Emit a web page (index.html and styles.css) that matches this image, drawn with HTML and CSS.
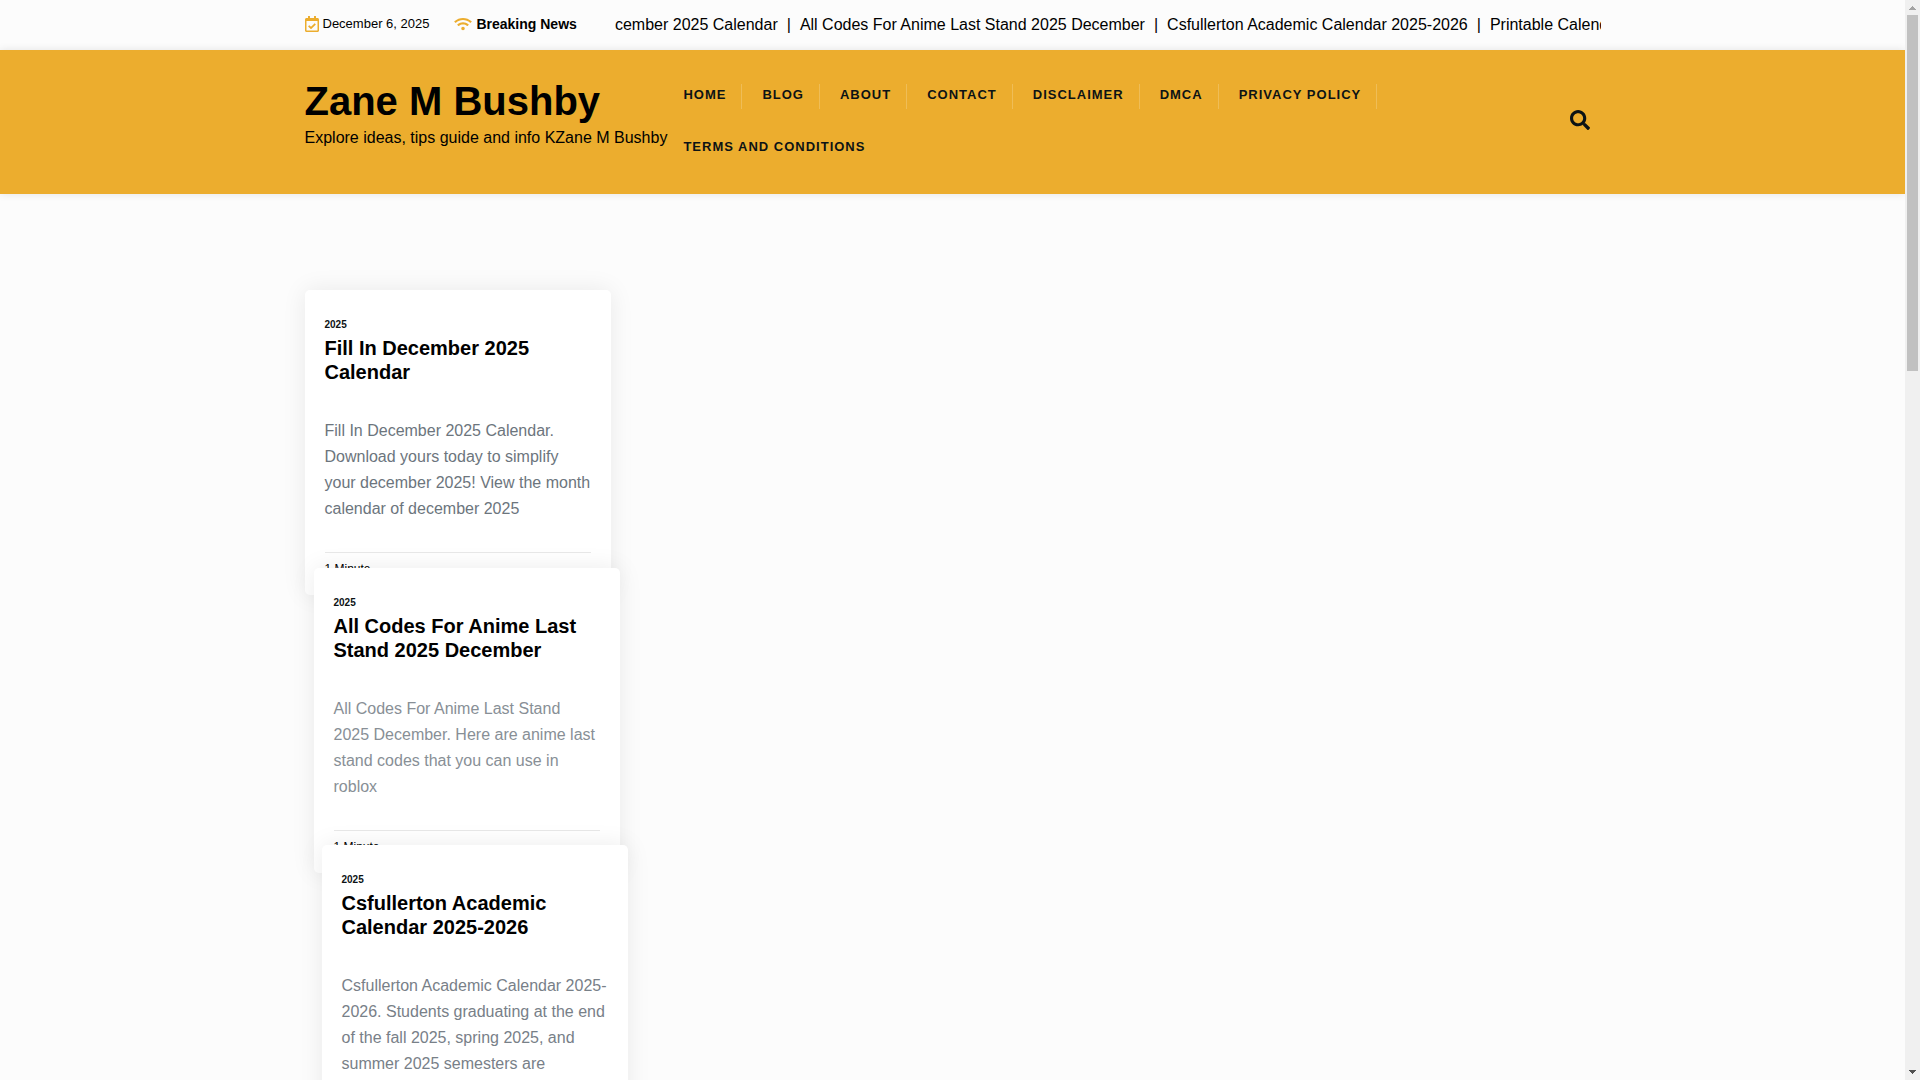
FILE: index.html
```html
<!DOCTYPE html>
<html lang="en">
<head>
    <meta charset="UTF-8">
    <meta name="viewport" content="width=device-width, initial-scale=1.0">
    <title>Zane M Bushby</title>
    <link rel="stylesheet" href="styles.css">
</head>
<body>
    <div class="page">
        <div class="topbar">
            <div class="container topbar-row">
                <div class="date">
                    <svg class="icon-calendar" viewBox="0 0 448 512"><path fill="currentColor" d="M400 64h-48V12c0-6.600-5.400-12-12-12h-40c-6.600 0-12 5.400-12 12v52H160V12c0-6.600-5.400-12-12-12h-40c-6.600 0-12 5.400-12 12v52H48C21.500 64 0 85.500 0 112v352c0 26.500 21.500 48 48 48h352c26.500 0 48-21.500 48-48V112c0-26.500-21.500-48-48-48zm-6 400H54c-3.300 0-6-2.700-6-6V160h352v298c0 3.300-2.700 6-6 6zm-52.800-186.100L200.600 417.400c-4.700 4.700-12.300 4.600-17-.1l-76.700-77.300c-4.700-4.700-4.600-12.300.1-17l22.700-22.500c4.700-4.700 12.300-4.600 17 .1l45.700 46.100 109.600-108.700c4.700-4.700 12.300-4.600 17 .1l22.500 22.700c4.700 4.800 4.600 12.400-.1 17.100z"/></svg>
                    <span>December 6, 2025</span>
                </div>
                <div class="breaking">
                    <svg class="icon-wifi" viewBox="0 0 640 512"><path fill="currentColor" d="M634.910 154.880C457.740-8.990 182.190-8.930 5.090 154.880c-6.660 6.160-6.790 16.590-.35 22.980l34.240 33.970c6.140 6.100 16.020 6.230 22.400.38 145.920-133.680 371.300-133.710 517.250 0 6.380 5.850 16.260 5.710 22.400-.38l34.240-33.970c6.430-6.390 6.300-16.820-.36-22.980zM320 352c-35.350 0-64 28.650-64 64s28.650 64 64 64 64-28.650 64-64-28.650-64-64-64zm202.670-83.590c-115.260-101.930-290.210-101.820-405.340 0-6.900 6.100-7.120 16.690-.57 23.150l34.440 33.990c6 5.920 15.660 6.320 22.050.8 83.950-72.570 209.740-72.410 293.490 0 6.390 5.520 16.050 5.130 22.050-.8l34.440-33.990c6.560-6.460 6.330-17.060-.56-23.150z"/></svg>
                    <strong>Breaking News</strong>
                </div>
                <div class="ticker">
                    <div class="ticker-track">
                        <a href="#">Fill In December 2025 Calendar</a>
                        <span>|</span>
                        <a href="#">All Codes For Anime Last Stand 2025 December</a>
                        <span>|</span>
                        <a href="#">Csfullerton Academic Calendar 2025-2026</a>
                        <span>|</span>
                        <a href="#">Printable Calendar December 2025</a>
                    </div>
                </div>
            </div>
        </div>

        <header class="header">
            <div class="container header-row">
                <div class="brand">
                    <h1><a href="#">Zane M Bushby</a></h1>
                    <p>Explore ideas, tips guide and info KZane M Bushby</p>
                </div>
                <nav class="menu">
                    <a href="#">Home</a>
                    <a href="#">Blog</a>
                    <a href="#">About</a>
                    <a href="#">Contact</a>
                    <a href="#">Disclaimer</a>
                    <a href="#">DMCA</a>
                    <a href="#">Privacy Policy</a>
                    <a href="#">Terms And Conditions</a>
                </nav>
                <button class="search" type="button" aria-label="Search">
                    <svg viewBox="0 0 512 512"><path fill="currentColor" d="M505 442.700L405.300 343c-4.500-4.500-10.600-7-17-7H372c27.600-35.300 44-79.700 44-128C416 93.100 322.900 0 208 0S0 93.100 0 208s93.100 208 208 208c48.300 0 92.700-16.400 128-44v16.300c0 6.400 2.500 12.500 7 17l99.700 99.700c9.400 9.400 24.600 9.400 33.900 0l28.300-28.300c9.400-9.400 9.400-24.600.1-34zM208 336c-70.700 0-128-57.200-128-128 0-70.700 57.200-128 128-128 70.700 0 128 57.200 128 128 0 70.700-57.200 128-128 128z"/></svg>
                </button>
            </div>
        </header>

        <main class="container posts">
            <article class="card">
                <a class="category" href="#">2025</a>
                <h2><a href="#">Fill In December 2025 Calendar</a></h2>
                <p class="excerpt">Fill In December 2025 Calendar. Download yours today to simplify your december 2025! View the month calendar of december 2025</p>
                <div class="meta">1 Minute</div>
            </article>
            <article class="card">
                <a class="category" href="#">2025</a>
                <h2><a href="#">All Codes For Anime Last Stand 2025 December</a></h2>
                <p class="excerpt">All Codes For Anime Last Stand 2025 December. Here are anime last stand codes that you can use in roblox</p>
                <div class="meta">1 Minute</div>
            </article>
            <article class="card">
                <a class="category" href="#">2025</a>
                <h2><a href="#">Csfullerton Academic Calendar 2025-2026</a></h2>
                <p class="excerpt">Csfullerton Academic Calendar 2025-2026. Students graduating at the end of the fall 2025, spring 2025, and summer 2025 semesters are</p>
                <div class="meta">1 Minute</div>
            </article>
        </main>
    </div>

    <div class="scrollbar" aria-hidden="true">
        <svg class="arrow arrow-up" viewBox="0 0 7 4"><path fill="currentColor" d="M3 0h1v1h1v1h1v1h1v1H0V3h1V2h1V1h1z"/></svg>
        <div class="thumb"></div>
        <svg class="arrow arrow-down" viewBox="0 0 7 4"><path fill="currentColor" d="M0 0h7v1H6v1H5v1H4v1H3V3H2V2H1V1H0z"/></svg>
    </div>
</body>
</html>
```
FILE: styles.css
```css
* {
    box-sizing: border-box;
}
body {
    display: flex;
    height: 100vh;
    margin: 0;
    overflow: hidden;
    background: #fcfcfc;
    color: #000;
    font-family: "Liberation Sans", Arial, sans-serif;
    font-size: 16px;
    line-height: 26px;
}
a {
    color: inherit;
    text-decoration: none;
}
h1, h2, p {
    margin: 0;
}
.page {
    flex: 1;
    min-width: 0;
    overflow: hidden;
}
.container {
    max-width: 1320px;
    margin: 0 auto;
    padding: 0 12px;
}

/* top bar */
.topbar-row {
    display: flex;
    align-items: center;
    height: 50px;
}
.date, .breaking {
    display: flex;
    align-items: center;
    gap: 4px;
    padding-bottom: 2px;
    white-space: nowrap;
}
.date {
    margin-right: 25px;
    font-size: 13px;
}
.breaking {
    margin-right: 38px;
    font-size: 14px;
}
.icon-calendar {
    width: 14px;
    height: 16px;
    color: #ecad2e;
}
.icon-wifi {
    width: 18px;
    height: 14px;
    color: #ecad2e;
}
.ticker {
    flex: 1;
    min-width: 0;
    overflow: hidden;
}
.ticker-track {
    display: flex;
    gap: 9px;
    margin-left: -63px;
    white-space: nowrap;
}

/* header */
.header {
    background: #ecad2e;
    box-shadow: 0 0 8px rgba(0,0,0,0.1);
}
.header-row {
    display: flex;
    align-items: center;
    min-height: 144px;
}
.brand {
    padding-bottom: 16px;
    white-space: nowrap;
}
.brand h1 {
    font-size: 40px;
    line-height: 48px;
}
.menu {
    flex: 1;
    display: flex;
    flex-wrap: wrap;
    gap: 27px 20px;
    padding: 0 20px 0 16px;
}
.menu a {
    padding: 0 15px 4px 0;
    border-right: 1px solid rgba(255,255,255,0.2);
    color: #0c1315;
    font-size: 13px;
    font-weight: bold;
    letter-spacing: 1px;
    line-height: 21px;
    text-transform: uppercase;
}
.menu a:last-child {
    border-right: none;
}
.search {
    padding: 0 11px 5px;
    border: none;
    background: none;
    color: #0c1315;
    cursor: pointer;
}
.search svg {
    display: block;
    width: 20px;
    height: 20px;
}

/* posts, stacked over each other */
.posts {
    padding-top: 96px;
}
.card {
    width: 306px;
    padding: 24px 20px 14px;
    border-radius: 5px;
    background: #fff;
    box-shadow: 0 0 25px rgba(0,0,0,0.08);
}
.card + .card {
    position: relative;
    margin-top: -27px;
    margin-left: 9px;
}
.card + .card + .card {
    margin-top: -28px;
    margin-left: 17px;
}
.category {
    display: block;
    color: #0c1315;
    font-size: 10px;
    font-weight: bold;
    line-height: 22px;
}
.card h2 {
    font-size: 20px;
    line-height: 24px;
}
.excerpt {
    margin: 34px 0 30px;
    color: #6c757d;
}
.card:nth-child(2) .excerpt {
    color: #888f96;
}
.card:nth-child(3) .excerpt {
    color: #788088;
}
.meta {
    padding-top: 4px;
    border-top: 1px solid #e8e8e8;
    font-size: 12px;
    line-height: 24px;
}

/* scrollbar */
.scrollbar {
    display: flex;
    flex-direction: column;
    align-items: center;
    width: 15px;
    background: #f0f0f0;
}
.thumb {
    width: 11px;
    height: 33%;
    background: #c1c1c1;
}
.arrow {
    width: 7px;
    height: 4px;
}
.arrow-up {
    margin: 6px 0 5px;
    color: #a3a3a3;
}
.arrow-down {
    margin: auto 0 6px;
    color: #505050;
}
```
